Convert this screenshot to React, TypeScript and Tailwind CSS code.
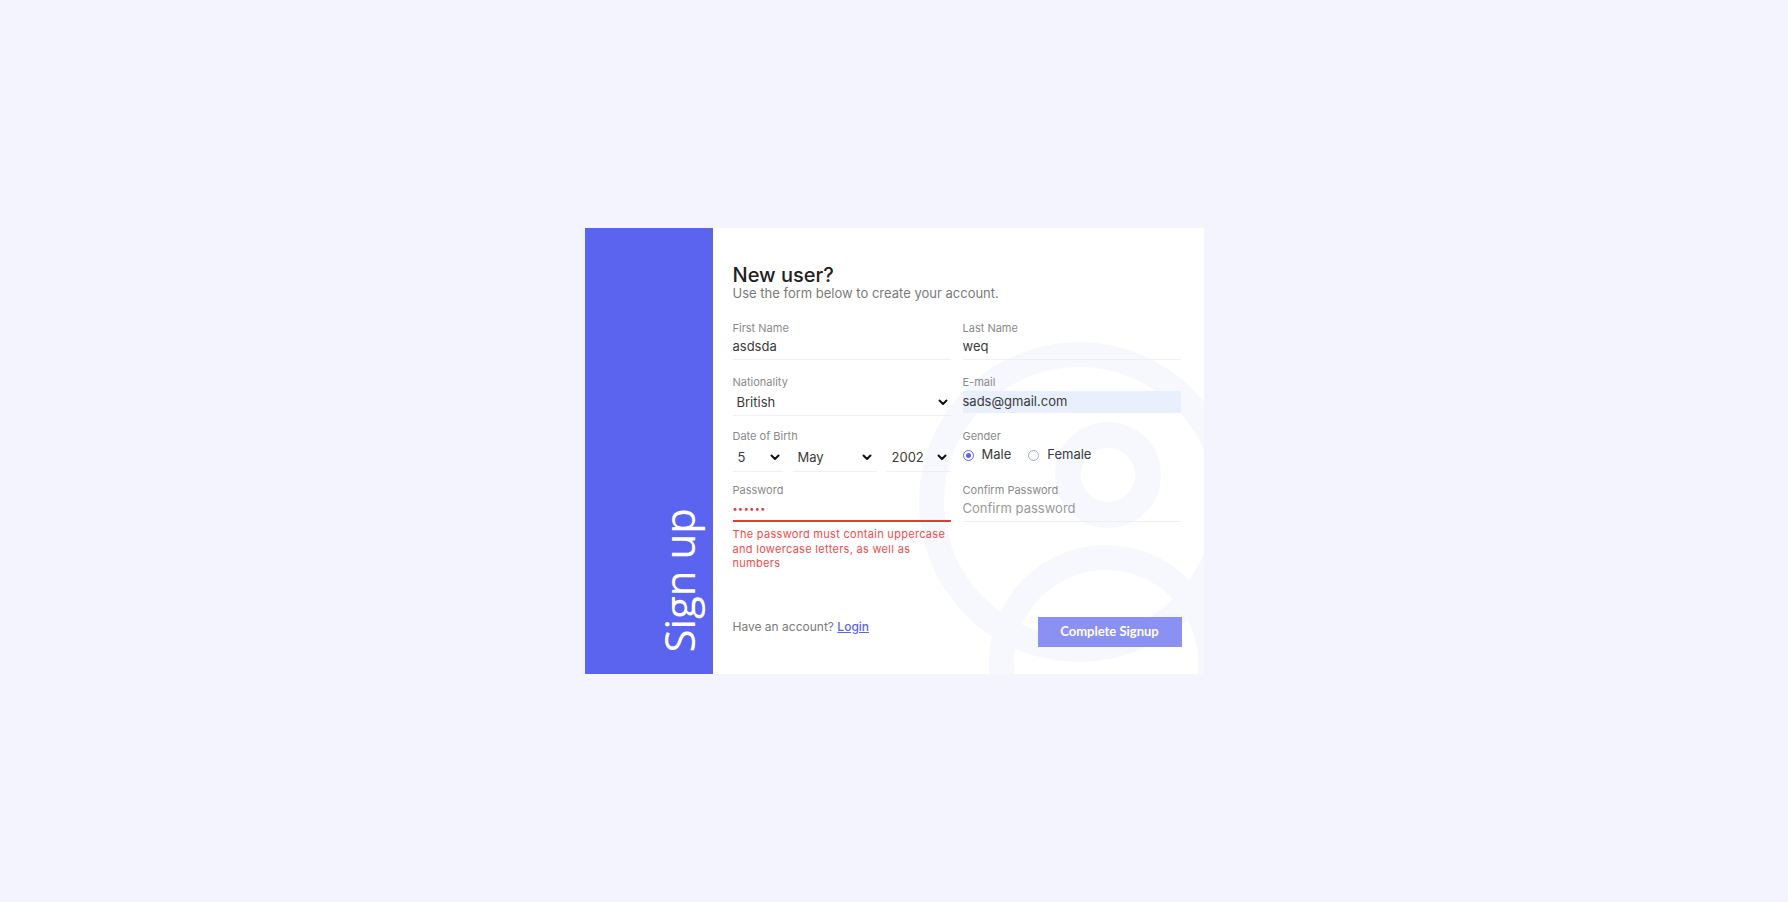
import React from "react";

const Chevron = () => (
  <svg width="10" height="7" viewBox="0 0 10 7" className="shrink-0">
    <path d="M1.5 1.5 L5 5 L8.5 1.5" fill="none" stroke="#111" strokeWidth="2" strokeLinecap="round" strokeLinejoin="round" />
  </svg>
);

const Label = ({ children }: { children: React.ReactNode }) => (
  <label className="block text-[11px] leading-[14px] text-[#8a8a8a]">{children}</label>
);

const SelectBox = ({ value, className, height }: { value: string; className: string; height: string }) => (
  <div className={`flex items-center justify-between border-b border-[#f0f0f0] ${height} ${className}`}>
    <span className="text-[13px] text-[#3a3a3a]">{value}</span>
    <Chevron />
  </div>
);

export default function App() {
  return (
    <div
      className="min-h-screen w-full bg-[#f3f4fd] flex items-center justify-center"
      style={{ fontFamily: "Inter, 'Noto Sans', sans-serif" }}
    >
      <div className="w-[619px] h-[446px] flex bg-white">
        {/* Left blue panel */}
        <div className="w-[128px] shrink-0 bg-[#5b64ee] flex flex-col justify-end items-end pb-[21px] pr-[13px]">
          <span
            className="[writing-mode:vertical-rl] rotate-180 text-white text-[42px] leading-[42px] font-normal"
            style={{ fontFamily: "'Open Sans', sans-serif" }}
          >
            Sign up
          </span>
        </div>

        {/* Right white panel */}
        <div className="relative flex-1 overflow-hidden pl-[20px] pr-[23px] pt-[36px] pb-[27px] flex flex-col">
          <svg className="absolute inset-0 w-full h-full" viewBox="0 0 491 446" preserveAspectRatio="xMinYMin slice">
            <circle cx="366" cy="274" r="147.5" fill="none" stroke="#f7f8fe" strokeWidth="25" />
            <circle cx="395" cy="247" r="40" fill="none" stroke="#f7f8fe" strokeWidth="26" />
            <circle cx="393" cy="434" r="104.5" fill="none" stroke="#f7f8fe" strokeWidth="25" />
          </svg>

          <div className="relative">
            <h1 className="text-[20px] leading-[22px] font-medium text-[#222]">New user?</h1>
            <p className="text-[13px] leading-[14px] text-[#7a7a7a]">Use the form below to create your account.</p>
          </div>

          <div className="relative grid grid-cols-2 gap-x-[12px] mt-[21px]">
            {/* Row 1 */}
            <div className="h-[54px]">
              <Label>First Name</Label>
              <input
                readOnly
                defaultValue="asdsda"
                className="mt-[1px] block w-full h-[24px] pb-[3px] border-b border-[#f0f0f0] bg-transparent text-[13px] text-[#3a3a3a] outline-none"
              />
            </div>
            <div className="h-[54px]">
              <Label>Last Name</Label>
              <input
                readOnly
                defaultValue="weq"
                className="mt-[1px] block w-full h-[24px] pb-[3px] border-b border-[#f0f0f0] bg-transparent text-[13px] text-[#3a3a3a] outline-none"
              />
            </div>

            {/* Row 2 */}
            <div className="h-[54px]">
              <Label>Nationality</Label>
              <SelectBox value="British" height="h-[26px]" className="mt-[1px] pl-[4px] pr-[3px]" />
            </div>
            <div className="h-[54px]">
              <Label>E-mail</Label>
              <input
                readOnly
                defaultValue="sads@gmail.com"
                className="mt-[2px] block w-full h-[22px] pb-[2px] bg-[#e8f0fe] text-[13px] text-[#3a3a3a] outline-none"
              />
            </div>

            {/* Row 3 */}
            <div className="h-[54px]">
              <Label>Date of Birth</Label>
              <div className="mt-[1px] flex">
                <SelectBox value="5" height="h-[28px]" className="w-[50px] pl-[5px] pr-[3px]" />
                <SelectBox value="May" height="h-[28px]" className="w-[84px] ml-[10px] pl-[5px] pr-[5px]" />
                <SelectBox value="2002" height="h-[28px]" className="w-[65px] ml-[9px] pl-[6px] pr-[4px]" />
              </div>
            </div>
            <div className="h-[54px]">
              <Label>Gender</Label>
              <div className="mt-[1px] h-[22px] flex items-center text-[13px] text-[#3a3a3a]">
                <span className="w-[11px] h-[11px] rounded-full border border-[#5b64ee] flex items-center justify-center">
                  <span className="w-[5px] h-[5px] rounded-full bg-[#5b64ee]" />
                </span>
                <span className="ml-[8px]">Male</span>
                <span className="ml-[17px] w-[11px] h-[11px] rounded-full border border-[#a3a7f2]" />
                <span className="ml-[8px]">Female</span>
              </div>
            </div>

            {/* Row 4 */}
            <div>
              <Label>Password</Label>
              <div className="mt-[1px] h-[24px] border-b-2 border-[#e53935] flex items-center">
                <span className="text-[9px] tracking-[0.5px] text-[#e53935]">••••••</span>
              </div>
              <p className="mt-[5px] text-[11px] leading-[14.5px] tracking-[0.3px] text-[#ef4c4c]">
                The password must contain uppercase and lowercase letters, as well as numbers
              </p>
            </div>
            <div>
              <Label>Confirm Password</Label>
              <input
                readOnly
                placeholder="Confirm password"
                className="mt-[1px] block w-full h-[24px] pb-[3px] border-b border-[#f0f0f0] bg-transparent text-[13px] text-[#3a3a3a] placeholder:text-[#9a9a9a] outline-none"
              />
            </div>
          </div>

          {/* Footer */}
          <div className="relative mt-auto flex items-end justify-between">
            <p className="mb-[12px] text-[12px] leading-[16px] text-[#7a7a7a]">
              Have an account?{" "}
              <a href="#" className="text-[#5b64ee] underline font-medium">
                Login
              </a>
            </p>
            <button
              className="w-[144px] h-[30px] mr-[-1px] bg-[#8b90f3] text-white text-[13px] font-bold"
              style={{ fontFamily: "Lato, sans-serif" }}
            >
              Complete Signup
            </button>
          </div>
        </div>
      </div>
    </div>
  );
}
